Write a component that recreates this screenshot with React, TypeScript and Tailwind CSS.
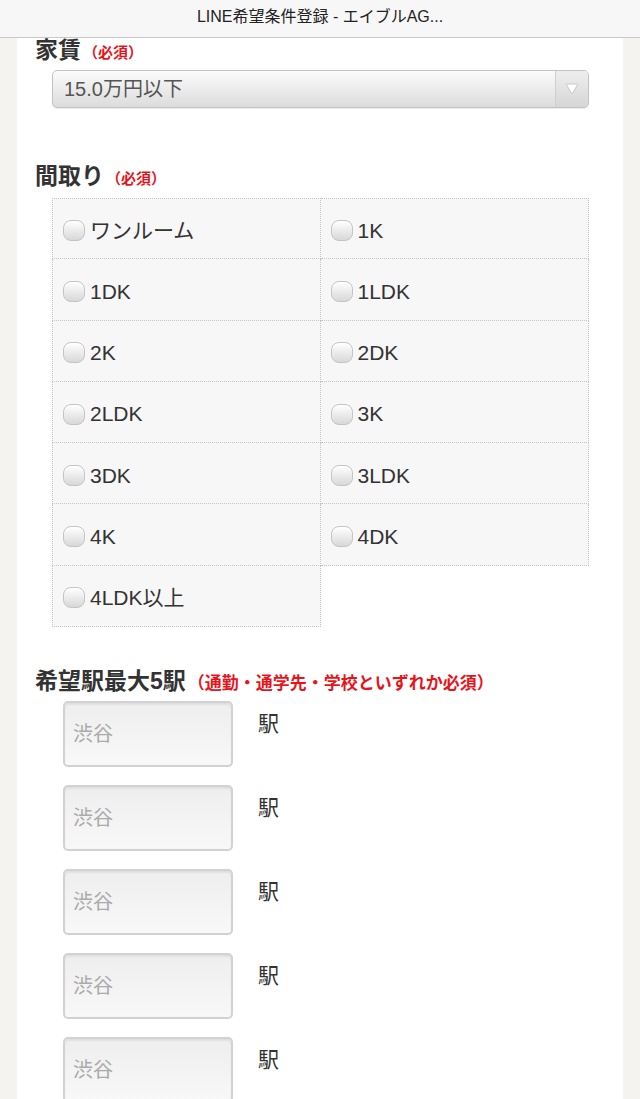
import React from "react";

const FONT = {
  fontFamily: '"Liberation Sans", "Noto Sans CJK JP", sans-serif',
};

const LAYOUTS = [
  "ワンルーム",
  "1K",
  "1DK",
  "1LDK",
  "2K",
  "2DK",
  "2LDK",
  "3K",
  "3DK",
  "3LDK",
  "4K",
  "4DK",
  "4LDK以上",
];

function Label({ title, note, big }: { title: string; note: string; big?: boolean }) {
  return (
    <div className="flex items-baseline leading-[24px]">
      <span className="text-[23px] font-bold text-[#333]">{title}</span>
      <span
        className={
          big
            ? "ml-[2px] text-[17px] font-bold text-[#e8141c]"
            : "ml-[2px] text-[15px] font-bold text-[#e8141c]"
        }
      >
        {note}
      </span>
    </div>
  );
}

function Checkbox() {
  return (
    <span className="inline-block h-[21px] w-[22px] shrink-0 rounded-[8px] border border-[#c4c4c4] bg-gradient-to-b from-[#ffffff] to-[#d8d8d8] shadow-[inset_0_1px_1px_rgba(255,255,255,0.9)]" />
  );
}

function StationInput() {
  return (
    <div className="flex items-start">
      <div className="flex h-[66px] w-[170px] items-center rounded-[5px] border-2 border-[#d2d2d2] bg-gradient-to-b from-[#eeeeee] to-[#f8f8f8] pl-[8px] shadow-[inset_0_2px_2px_rgba(0,0,0,0.06)]">
        <span className="text-[20px] text-[#aaa]">渋谷</span>
      </div>
      <span className="ml-[25px] mt-[7px] text-[21px] text-[#333]">駅</span>
    </div>
  );
}

export default function App() {
  return (
    <div className="min-h-screen bg-[#f4f3f0]" style={FONT}>
      {/* Header */}
      <div className="flex h-[38px] items-center justify-center border-b border-[#c9c9c9] bg-[#f7f7f7] pb-[3px]">
        <span className="text-[16px] text-[#222]">LINE希望条件登録 - エイブルAG...</span>
      </div>

      <div className="mx-[17px] min-h-[1061px] bg-white px-[18px]">
        {/* Rent */}
        <Label title="家賃" note="（必須）" />
        <div className="ml-[17px] mt-[5px] flex h-[38px] w-[537px] overflow-hidden rounded-[5px] border border-[#c3c3c3] bg-gradient-to-b from-[#fbfbfb] to-[#dcdcdc] shadow-[0_1px_1px_rgba(0,0,0,0.08)]">
          <div className="flex flex-1 items-center pl-[11px]">
            <span className="text-[20px] text-[#555]">15.0万円以下</span>
          </div>
          <div className="flex w-[33px] items-center justify-center border-l border-[#cfcfcf] bg-gradient-to-b from-[#eeeeee] to-[#d6d6d6]">
            <svg width="14" height="12" viewBox="0 0 14 12">
              <path d="M1 1 L13 1 L7 11 Z" fill="#ffffff" stroke="#c9c9c9" strokeWidth="1" />
            </svg>
          </div>
        </div>

        {/* Layout */}
        <div className="mt-[56px]">
          <Label title="間取り" note="（必須）" />
        </div>
        <div className="ml-[17px] mt-[7px] grid w-[537px] grid-cols-2">
          {LAYOUTS.map((name, i) => (
            <div
              key={name}
              className={
                "flex h-[61.3px] items-center gap-[5px] border-b border-r border-dotted border-[#c4c4c4] bg-[#f7f7f7] pl-[10px] pt-[4px] " +
                (i % 2 === 0 ? "border-l " : "") +
                (i < 2 ? "border-t" : "")
              }
            >
              <Checkbox />
              <span className="text-[21px] text-[#333]">{name}</span>
            </div>
          ))}
        </div>

        {/* Stations */}
        <div className="mt-[42px]">
          <Label title="希望駅最大5駅" note="（通勤・通学先・学校といずれか必須）" big />
        </div>
        <div className="ml-[28px] mt-[5px] flex flex-col gap-[18px]">
          {[0, 1, 2, 3, 4].map((i) => (
            <StationInput key={i} />
          ))}
        </div>
      </div>
    </div>
  );
}
